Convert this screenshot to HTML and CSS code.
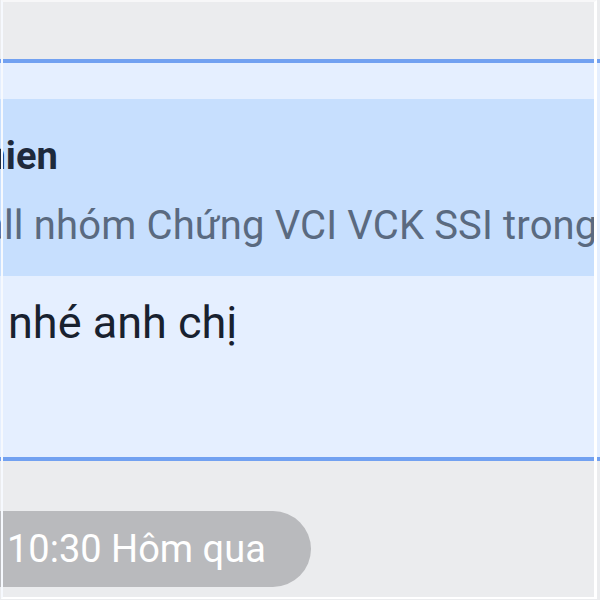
FILE: index.html
```html
<!DOCTYPE html>
<html lang="vi">
<head>
  <meta charset="UTF-8" />
  <meta name="viewport" content="width=device-width, initial-scale=1.0"/>
  <title>Tin nhắn</title>
  <link rel="stylesheet" href="styles.css">
</head>
<body>
  <div class="screen">
    <div class="bubble">
      <div class="quote">
        <div class="quote-body">
          <div class="quote-name">Thien</div>
          <div class="quote-text">call nhóm Chứng VCI VCK SSI trong ngày</div>
        </div>
      </div>
      <div class="message">nhé anh chị</div>
    </div>
    <div class="time-row">
      <span class="time-pill">10:30 Hôm qua</span>
    </div>
  </div>
</body>
</html>
```

FILE: styles.css
```css
html, body {
  margin: 0;
  padding: 0;
}
body {
  font-family: Roboto, "Noto Sans", Arial, sans-serif;
  background: #ebecee;
}
.screen {
  position: relative;
  width: 600px;
  height: 600px;
  overflow: hidden;
  padding-top: 59px;
  box-sizing: border-box;
  background: #ebecee;
}
/* thin white frame of the window lying over everything */
.screen::after {
  content: "";
  position: absolute;
  top: 0;
  left: 1px;
  right: 3px;
  bottom: 1px;
  border-top: 2px solid #f7f7f8;
  border-left: 2px solid #f6f9fe;
  border-right: 3px solid #fff;
  border-bottom: 2px solid #fff;
  pointer-events: none;
}
.bubble {
  background: #e5efff;
  border-top: 4px solid #72a1f1;
  border-bottom: 4px solid #72a1f1;
  padding: 36px 0 103px 8px;
}
.quote {
  background: #c7dffe;
  margin: 0 5px 16px -8px;
  padding: 31px 0 22px;
  overflow: hidden;
}
.quote-body {
  margin-left: -39px;
  white-space: nowrap;
}
.quote-name {
  font-size: 38px;
  line-height: 52px;
  font-weight: bold;
  color: #1e2a3c;
  margin-bottom: 16px;
}
.quote-text {
  font-size: 40px;
  line-height: 56px;
  letter-spacing: 0.15px;
  color: #5a6a80;
}
.message {
  font-size: 45px;
  line-height: 62px;
  color: #18212f;
}
.time-row {
  display: flex;
  margin-top: 50px;
}
.time-pill {
  display: inline-block;
  background: #b9babd;
  color: #fff;
  font-size: 38px;
  line-height: 76px;
  height: 76px;
  border-radius: 38px;
  margin-left: -40px;
  padding: 0 45px 0 47px;
}
```
